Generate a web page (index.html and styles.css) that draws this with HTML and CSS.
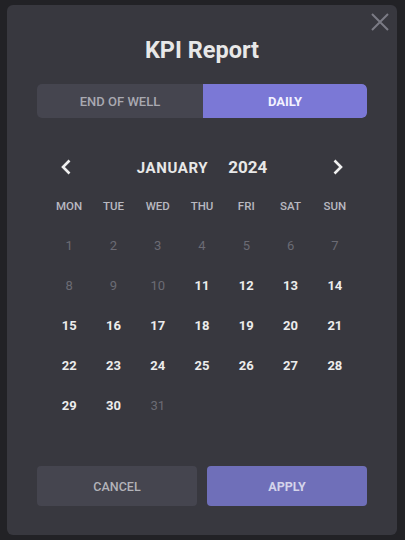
FILE: index.html
```html
<!DOCTYPE html>
<html lang="en">

<head>
  <meta charset="UTF-8">
  <title>KPI Report</title>
  <meta name="viewport" content="width=device-width, initial-scale=1">
  <link rel="stylesheet" href="styles.css">
</head>

<body>
  <div class="modal">
    <button class="close" aria-label="Close">
      <svg width="18" height="18" viewBox="0 0 18 18"><path d="M1 1 L17 17 M17 1 L1 17" stroke="currentColor" stroke-width="2" fill="none"/></svg>
    </button>

    <h1 class="title">KPI Report</h1>

    <div class="toggle">
      <button class="toggle-btn">END OF WELL</button>
      <button class="toggle-btn active">DAILY</button>
    </div>

    <div class="month-nav">
      <button class="chev" aria-label="Previous month">
        <svg width="12" height="16" viewBox="0 0 12 16"><path d="M9.5 1.5 L3 8 L9.5 14.5" stroke="currentColor" stroke-width="2.6" fill="none"/></svg>
      </button>
      <div class="month-label"><span class="month">JANUARY</span><span class="year">2024</span></div>
      <button class="chev" aria-label="Next month">
        <svg width="12" height="16" viewBox="0 0 12 16"><path d="M2.5 1.5 L9 8 L2.5 14.5" stroke="currentColor" stroke-width="2.6" fill="none"/></svg>
      </button>
    </div>

    <div class="weekdays">
      <span>MON</span><span>TUE</span><span>WED</span><span>THU</span><span>FRI</span><span>SAT</span><span>SUN</span>
    </div>

    <div class="days" id="days"></div>

    <div class="actions">
      <button class="btn cancel">CANCEL</button>
      <button class="btn apply">APPLY</button>
    </div>
  </div>

  <script>
    const daysEl = document.getElementById('days');
    for (let d = 1; d <= 31; d++) {
      const cell = document.createElement('span');
      cell.className = (d <= 10 || d === 31) ? 'day disabled' : 'day';
      cell.innerText = d;
      daysEl.appendChild(cell);
    }
  </script>
</body>

</html>
```

FILE: styles.css
```css
* {
  box-sizing: border-box;
}

html {
  font-family: Roboto, "Liberation Sans", Arial, sans-serif;
  background: #222226;
  color: #ececec;
  -webkit-font-smoothing: antialiased;
}

body {
  margin: 0;
  padding: 5px 8px 5px 7px;
}

button {
  font-family: inherit;
  border: 0;
  background: none;
  color: inherit;
  padding: 0;
  cursor: pointer;
}

.modal {
  position: relative;
  width: 390px;
  height: 530px;
  background: #38383f;
  border-radius: 6px;
  padding: 30px 30px 0;
  display: flex;
  flex-direction: column;
}

.close {
  position: absolute;
  top: 8px;
  right: 8px;
  width: 18px;
  height: 18px;
  color: #7b7b85;
  display: flex;
}

.title {
  margin: 0;
  font-size: 23.5px;
  line-height: 30px;
  font-weight: 700;
  text-align: center;
  color: #e8e8e8;
}

.toggle {
  margin-top: 19px;
  display: flex;
  height: 34px;
  border-radius: 5px;
  overflow: hidden;
  background: #45454f;
}

.toggle-btn {
  flex: 1;
  font-size: 13px;
  font-weight: 500;
  color: #a9a9b1;
}

.toggle-btn.active {
  flex: 0 0 164px;
  background: #7b78d6;
  color: #f2f2ff;
  font-weight: 700;
  border-radius: 0 5px 5px 0;
}

.month-nav {
  margin-top: 34px;
  height: 30px;
  padding: 0 23px;
  display: flex;
  align-items: center;
  justify-content: space-between;
}

.chev {
  display: flex;
  color: #f0f0f0;
}

.month-label {
  display: flex;
  align-items: baseline;
  gap: 20px;
}

.month {
  font-size: 15px;
  font-weight: 700;
  letter-spacing: 0.6px;
  color: #e8e8e8;
}

.year {
  font-size: 17px;
  font-weight: 700;
  color: #e8e8e8;
}

.weekdays,
.days {
  margin: 0 10px;
  display: grid;
  grid-template-columns: repeat(7, 1fr);
  text-align: center;
}

.weekdays {
  margin-top: 14px;
  height: 20px;
  line-height: 20px;
  font-size: 11.5px;
  font-weight: 500;
  color: #b9b9c1;
}

.days {
  margin-top: 10px;
  grid-auto-rows: 40px;
}

.day {
  line-height: 40px;
  font-size: 13px;
  font-weight: 700;
  color: #ececec;
}

.day.disabled {
  font-weight: 400;
  color: #6b6b74;
}

.actions {
  margin-top: 40px;
  display: flex;
  gap: 10px;
}

.btn {
  flex: 1;
  height: 40px;
  border-radius: 4px;
  font-size: 12.5px;
}

.cancel {
  background: #45454f;
  color: #b3b3b9;
  font-weight: 500;
}

.apply {
  background: #6f6fb9;
  color: #d4d4ea;
  font-weight: 700;
}
```
